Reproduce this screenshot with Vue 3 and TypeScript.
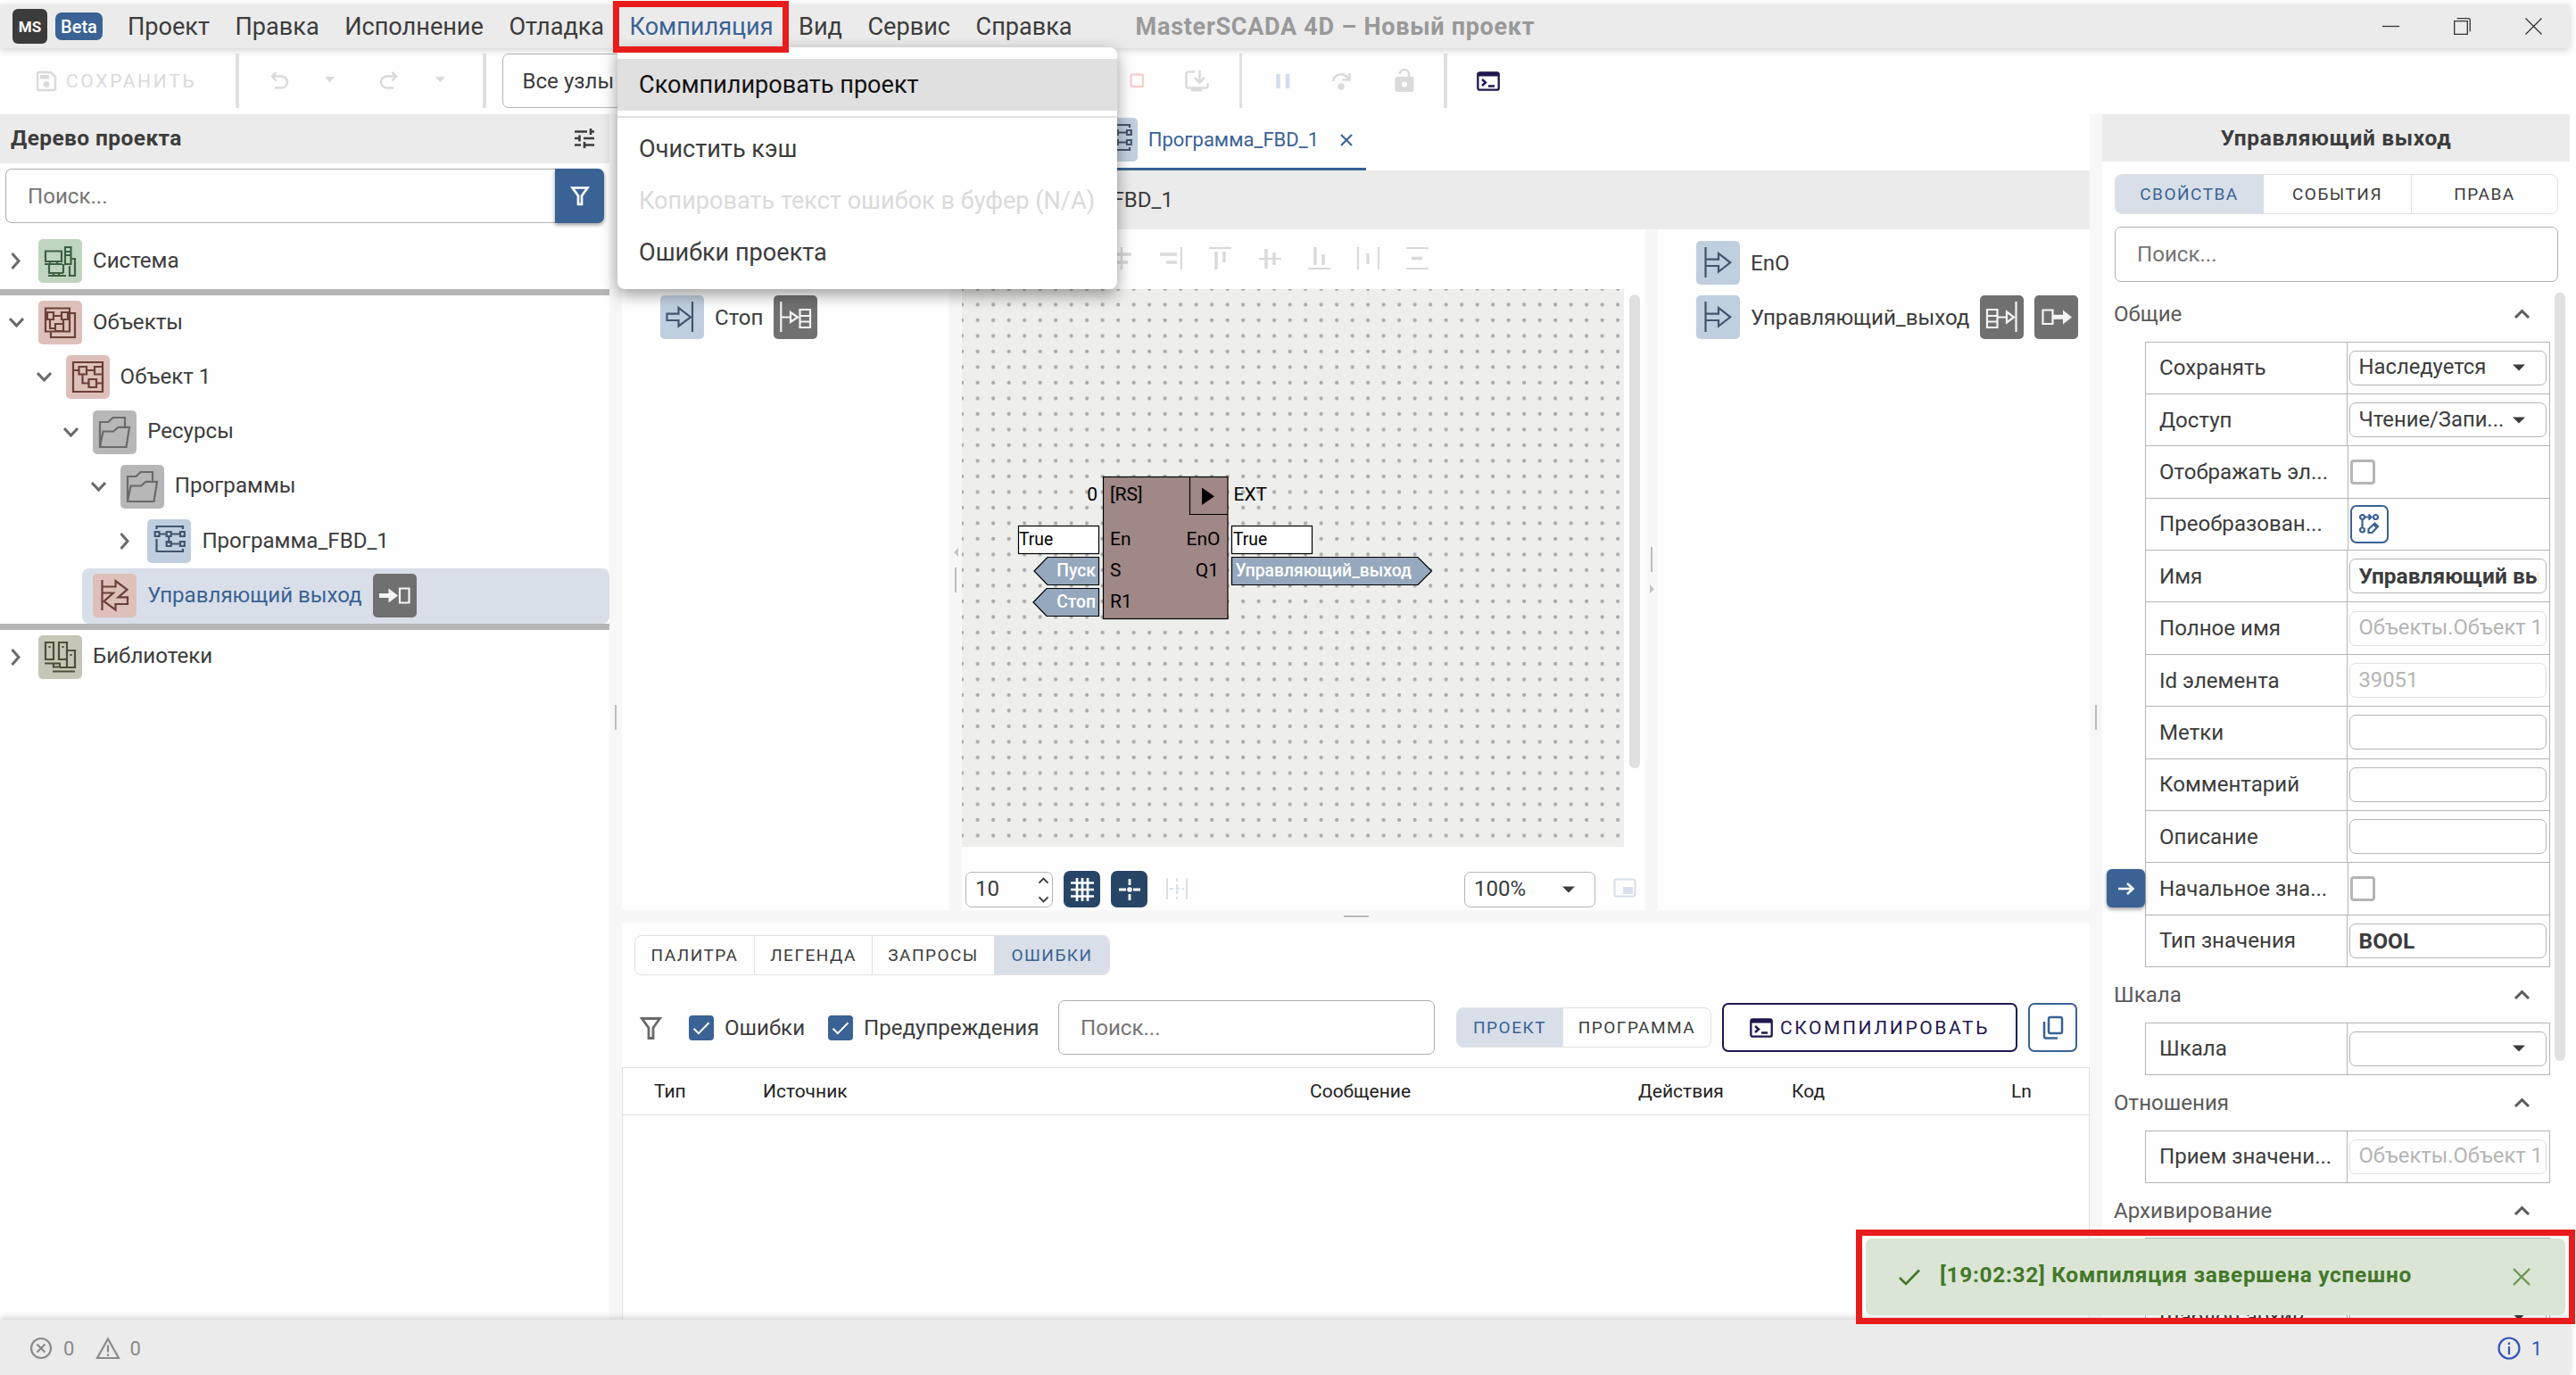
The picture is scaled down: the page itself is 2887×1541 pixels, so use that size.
<script setup lang="ts">
import { h } from 'vue'

interface IconDef { box: string; w: number; h: number; body: string }

const tile = (body: string): IconDef => ({ box: '0 0 49 49', w: 49, h: 49, body })
const glyph = (w: number, hh: number, body: string): IconDef => ({ box: `0 0 ${w} ${hh}`, w, h: hh, body })

const icons: Record<string, IconDef> = {
  system: tile('<path d="M8 13.500h18v11.500H8zM7 28h20M13 25v3M21 25v3M30 9h6.500v19H30zM30 14h6.500M30 18h6.500M12 28v10h16M28 28v10M11 41h20M17 38v3M23 38v3M36 22h5v19h-6V30"/>'),
  objects: tile('<path d="M8 8.500h27v26H8zM35 14h6v27H14v-6M10 13h7v8h-7zM26 13h7v8h-7zM17 17h9M13 21v10h6M19 26h9v8h-9zM28 21v5"/>'),
  object: tile('<path d="M8 8h33v33H8zM14.500 13h8.500v8.500h-8.500zM32 13h9v8.500h-9zM8 17h6M23 17h9M18.500 21.500v10H25M25.500 27h8.500v9h-8.500zM34 31.500h7"/>'),
  folder: tile('<path d="M8 41V13h9.500l5-5H36v11M8 41l3.500-17.500H23l5.500-4.700H41L37.500 41z"/>'),
  fbd: tile('<path d="M10.500 11V8H40v3M10.500 22v14H40v-3M13.500 16.500h8M27 16.500h10M24.300 19v8M27 27.500h10M8.700 14h4.800v5H8.700zM21.700 14h5v5h-5zM37 14h4.800v5H37zM21.700 25h5v5h-5zM37 25h4.800v5H37z"/>'),
  inout: tile('<path d="M10.500 7v34M10.500 14.500h15V8l13 9.800-10 8.500H39V34H25.500v6.500L12.500 31 23 21.500H10.500"/>'),
  libs: tile('<path d="M8 8h9v19H8zM23 8h9v19h-9zM32 17h9v19h-9zM7 31.500h18M17 31.500v4h7v-4M24 36h8v-9M16 40.500h25M12.500 12v2M27.500 12v2M36.500 21v2"/>'),
  arrowIn: tile('<path d="M7.500 20.700h13V14L34 24.500 20.500 34.500V28h-13zM36 7v34"/>'),
  arrowOut: tile('<path d="M10.500 7v34M10.500 20.700H25V14l13.200 10.300L25 34.500V28H10.500"/>'),
  linkIn: tile('<path d="M8.300 7v34M8.300 24.500H18M19 19l8 5.500-8 5.500zM29.500 16H41v20H29.500zM29.500 23H41M29.500 29.500H41"/>'),
  linkOut: tile('<path d="M8 16h11.500v20H8zM8 23h11.500M8 29.500h11.500M19.500 24.500h10M30 18.500l8 6-8 6zM40.500 7v34"/>'),
  toBox: tile('<path d="M7 24.500h12" stroke-width="5"/><path d="M17.500 16.500v16l10.500-8z" fill="currentColor" stroke="none"/><path d="M30 16.500h10.500v16H30z"/>'),
  fromBox: tile('<path d="M9.500 16.500h11v15.500h-11z"/><path d="M21 24.300h12" stroke-width="5"/><path d="M32 16.500v16l10-8z" fill="currentColor" stroke="none"/>'),
  right: glyph(17, 21, '<path d="M3.500 2l7.500 8.500L3.500 19" stroke-width="3"/>'),
  down: glyph(17, 21, '<path d="M1 6l7.500 8L16 6" stroke-width="3"/>'),
  up: glyph(19, 12, '<path d="M2 10l7.500-7.500L17 10" stroke-width="3"/>'),
  caret: glyph(14, 8, '<path d="M0 .5h14L7 7.500z" fill="currentColor" stroke="none"/>'),
  caretSmall: glyph(11, 7, '<path d="M0 0h11L5.500 6.500z" fill="currentColor" stroke="none"/>'),
  save: glyph(24, 24, '<path d="M2 3.500A1.500 1.500 0 0 1 3.500 2H17l5 5v13.500a1.500 1.500 0 0 1-1.500 1.500h-17A1.500 1.500 0 0 1 2 20.500z" stroke-width="2.500"/><path d="M5 5h10v4.500H5z" fill="currentColor" stroke="none"/><circle cx="12" cy="15.500" r="3.500" fill="currentColor" stroke="none"/>'),
  undo: glyph(22, 22, '<path d="M7.500 2L3 6.500l4.500 5M3 6.500h10.500a6 6 0 0 1 0 13H6" stroke-width="2.500"/>'),
  redo: glyph(22, 22, '<path d="M14.500 2L19 6.500l-4.500 5M19 6.500H8.500a6 6 0 0 0 0 13H16" stroke-width="2.500"/>'),
  stop: glyph(17, 17, '<rect x="1.500" y="1.500" width="13.500" height="13.500" rx="1.500" stroke-width="2.300"/>'),
  deploy: glyph(28, 26, '<path d="M12 2.500H4.500A2 2 0 0 0 2.500 4.500v14a2 2 0 0 0 2 2h20a2 2 0 0 0 2-2V15M17.500 1v13M12 9l5.500 5.500L23 9" stroke-width="2.500"/><path d="M8 20h12v4.500H8z" fill="currentColor" stroke="none"/>'),
  pause: glyph(18, 18, '<path d="M3.500 1v16M14 1v16" stroke-width="4.500"/>'),
  step: glyph(24, 22, '<path d="M2 11a9 9 0 0 1 17-2.500M20.500 2v7.500h-8" stroke-width="2.600"/><circle cx="11" cy="17" r="3.700" fill="currentColor" stroke="none"/>'),
  lock: glyph(24, 30, '<path d="M7 7a5 5 0 0 1 10 0v4" stroke-width="2.500"/><path d="M3.500 10h17a2 2 0 0 1 2 2v13a2 2 0 0 1-2 2h-17a2 2 0 0 1-2-2V12a2 2 0 0 1 2-2zM12 15.500a3 3 0 1 0 0 6 3 3 0 0 0 0-6z" fill="currentColor" fill-rule="evenodd" stroke="none"/>'),
  term: glyph(26, 22, '<rect x="1.300" y="1.300" width="23.400" height="19.400" rx="2" stroke-width="2.300"/><path d="M1 1h24v4.500H1z" fill="currentColor" stroke="none"/><path d="M6 9l4 3.500L6 16M13 16.500h7" stroke-width="2.400"/>'),
  tune: glyph(24, 24, '<path d="M1 4.500h14M19 1v7M19 4.500h4M1 12h5M6.500 8.500v7M11 12h12M1 19.500h7M12 16v7M12 19.500h11" stroke-width="2.600"/>'),
  funnel: glyph(26, 26, '<path d="M2.500 2.500h20L15 13v11.500h-5V13z" stroke-width="2.800"/>'),
  funnelSmall: glyph(22, 24, '<path d="M2.500 2.500h17L13 11.500V21H9v-9.500z" stroke-width="2.700"/>'),
  close: glyph(16, 16, '<path d="M2 2l12 12M14 2L2 14" stroke-width="2"/>'),
  closeBig: glyph(22, 22, '<path d="M2 2l18 18M20 2L2 20" stroke-width="2.300"/>'),
  check: glyph(26, 20, '<path d="M2 11l7 7L24 2.500" stroke-width="2.600"/>'),
  copy: glyph(26, 28, '<rect x="8" y="2" width="15" height="18" rx="2" stroke-width="2.500"/><path d="M3 7v16.500a2 2 0 0 0 2 2h13" stroke-width="2.500"/>'),
  grid: glyph(28, 28, '<path d="M8 1v26M14 1v26M20 1v26M1 6.500h26M1 14h26M1 21.500h26" stroke-width="2.700"/>'),
  snap: glyph(28, 28, '<path d="M14 2v7M14 19v7M2 14h8M18 14h8" stroke-width="2.800"/><circle cx="14" cy="14" r="2.800" fill="currentColor" stroke="none"/>'),
  guides: glyph(26, 26, '<path d="M2 1v24M24 1v24" stroke-width="2"/><path d="M13 1v24M5 13h16" stroke-width="2" stroke-dasharray="4 3"/>'),
  minimap: glyph(26, 22, '<rect x="1.500" y="1.500" width="23" height="19" rx="2"/><path d="M11 10h11v8H11z" fill="currentColor" stroke="none"/>'),
  arrow: glyph(20, 16, '<path d="M1 8h16M11 2l6.500 6L11 14" stroke-width="2.500"/>'),
  convert: glyph(24, 24, '<circle cx="4.500" cy="4.500" r="2.500"/><circle cx="19.500" cy="4.500" r="2.500"/><circle cx="4.500" cy="19" r="2.500"/><path d="M4.500 7v9.500M8 4.500h6M11.500 1.500l3 3-3 3"/><path d="M11.500 22v-4l7-6.500 3.500 3.500-6.500 7z" stroke-width="2.200"/><path d="M17 12l3.500 3.500" stroke-width="3"/>'),
  alignHCenter: glyph(26, 26, '<path d="M13 1v25"/><path d="M2 9h22M6 18h14" stroke-width="3.500"/>'),
  alignRight: glyph(26, 26, '<path d="M25 1v25"/><path d="M1 9h19M8 18h12" stroke-width="3.500"/>'),
  alignTop: glyph(26, 26, '<path d="M1 2h25"/><path d="M9 6v20M18 6v12" stroke-width="3.500"/>'),
  alignMiddle: glyph(26, 26, '<path d="M1 14h25"/><path d="M9 3v22M18 7v14" stroke-width="3.500"/>'),
  alignBottom: glyph(26, 26, '<path d="M1 25h25"/><path d="M9 1v20M18 9v12" stroke-width="3.500"/>'),
  distH: glyph(26, 26, '<path d="M2 1v25M25 1v25"/><path d="M13 8v12" stroke-width="3.500"/>'),
  distV: glyph(26, 26, '<path d="M1 2h25M1 25h25"/><path d="M7 13.500h12" stroke-width="3.500"/>'),
  errors: glyph(26, 26, '<circle cx="13" cy="13" r="11"/><path d="M8.500 8.500l9 9M17.500 8.500l-9 9"/>'),
  warn: glyph(28, 26, '<path d="M14 2.500L26 24H2zM14 9.500v8M14 19.500v2.500"/>'),
  info: glyph(26, 26, '<circle cx="13" cy="13" r="11.500"/><path d="M13 11v9M13 6.500v2.500"/>'),
  minimize: glyph(19, 19, '<path d="M0 9.500h19" stroke-width="1.300"/>'),
  restore: glyph(19, 19, '<path d="M.7 3.700h14.600v14.600H.7zM3.700 .7h12.600a2 2 0 0 1 2 2v12.600" stroke-width="1.300"/>'),
  winClose: glyph(19, 19, '<path d="M.5 .5l18 18M18.500 .5l-18 18" stroke-width="1.300"/>'),
}

const Icon = (props: { name: string }) => {
  const d = icons[props.name]
  return h('svg', {
    viewBox: d.box, width: d.w, height: d.h, fill: 'none', stroke: 'currentColor',
    'stroke-width': 2.2, style: 'display:block;flex:none', innerHTML: d.body,
  })
}
Icon.props = ['name']

const menuLeft = ['Проект', 'Правка', 'Исполнение', 'Отладка', 'Компиляция', 'Вид', 'Сервис', 'Справка']

interface TreeRow { label: string; icon: string; tone: string; level: number; chevron: string; line?: boolean; selected?: boolean }
const tree: TreeRow[] = [
  { label: 'Система', icon: 'system', tone: 'green', level: 0, chevron: 'right', line: true },
  { label: 'Объекты', icon: 'objects', tone: 'red', level: 0, chevron: 'down' },
  { label: 'Объект 1', icon: 'object', tone: 'red', level: 1, chevron: 'down' },
  { label: 'Ресурсы', icon: 'folder', tone: 'gray', level: 2, chevron: 'down' },
  { label: 'Программы', icon: 'folder', tone: 'gray', level: 3, chevron: 'down' },
  { label: 'Программа_FBD_1', icon: 'fbd', tone: 'blue', level: 4, chevron: 'right' },
  { label: 'Управляющий выход', icon: 'inout', tone: 'red', level: 2, chevron: '', line: true, selected: true },
  { label: 'Библиотеки', icon: 'libs', tone: 'olive', level: 0, chevron: 'right' },
]

interface Prop { label: string; kind: 'select' | 'check' | 'button' | 'text'; value?: string; bold?: boolean; off?: boolean; reset?: boolean }
const groups: { title: string; rows: Prop[] }[] = [
  {
    title: 'Общие',
    rows: [
      { label: 'Сохранять', kind: 'select', value: 'Наследуется' },
      { label: 'Доступ', kind: 'select', value: 'Чтение/Запи...' },
      { label: 'Отображать эл...', kind: 'check' },
      { label: 'Преобразован...', kind: 'button' },
      { label: 'Имя', kind: 'text', value: 'Управляющий выход', bold: true },
      { label: 'Полное имя', kind: 'text', value: 'Объекты.Объект 1', off: true },
      { label: 'Id элемента', kind: 'text', value: '39051', off: true },
      { label: 'Метки', kind: 'text' },
      { label: 'Комментарий', kind: 'text' },
      { label: 'Описание', kind: 'text' },
      { label: 'Начальное зна...', kind: 'check', reset: true },
      { label: 'Тип значения', kind: 'text', value: 'BOOL', bold: true },
    ],
  },
  { title: 'Шкала', rows: [{ label: 'Шкала', kind: 'select', value: '' }] },
  { title: 'Отношения', rows: [{ label: 'Прием значени...', kind: 'text', value: 'Объекты.Объект 1', off: true }] },
  { title: 'Архивирование', rows: [{ label: '', kind: 'check' }, { label: 'Шаблон архив...', kind: 'select', value: '' }] },
]

const alignTools = ['alignHCenter', 'alignRight', 'alignTop', 'alignMiddle', 'alignBottom', 'distH', 'distV']
</script>

<template>
  <div class="app">
    <header class="titlebar">
      <span class="logo">MS</span>
      <span class="beta">Beta</span>
      <nav class="menu">
        <span v-for="m in menuLeft" :key="m" :class="{ on: m === 'Компиляция' }">{{ m }}</span>
      </nav>
      <span class="caption">MasterSCADA 4D – Новый проект</span>
      <div class="win"><Icon name="minimize" /><Icon name="restore" /><Icon name="winClose" /></div>
    </header>

    <div class="toolbar">
      <div class="save"><Icon name="save" /><span>СОХРАНИТЬ</span></div>
      <i class="sep"></i>
      <div class="history">
        <Icon name="undo" /><Icon name="caretSmall" /><Icon name="redo" /><Icon name="caretSmall" />
      </div>
      <i class="sep"></i>
      <div class="nodes">Все узлы</div>
      <div class="run"><Icon class="pink" name="stop" /><Icon name="deploy" /></div>
      <i class="sep"></i>
      <div class="debug"><Icon class="bluish" name="pause" /><Icon name="step" /><Icon name="lock" /></div>
      <i class="sep"></i>
      <div class="term"><Icon name="term" /></div>
    </div>

    <main class="main">
      <aside class="left">
        <div class="left-head"><b>Дерево проекта</b><Icon name="tune" /></div>
        <div class="find">
          <div class="find-input">Поиск...</div>
          <div class="find-btn"><Icon name="funnelSmall" /></div>
        </div>
        <div class="tree">
          <template v-for="r in tree" :key="r.label">
            <div class="row" :style="{ paddingLeft: r.level * 30.600 + 'px' }">
              <span class="chev"><Icon v-if="r.chevron" :name="r.chevron" /></span>
              <div class="row-body" :class="{ sel: r.selected }">
                <span class="tile" :class="r.tone"><Icon :name="r.icon" /></span>
                <span class="name">{{ r.label }}</span>
                <span v-if="r.selected" class="tile dark"><Icon name="toBox" /></span>
              </div>
            </div>
            <div v-if="r.line" class="line"></div>
          </template>
        </div>
      </aside>

      <div class="split-v"><i></i></div>

      <section class="center">
        <div class="tabs">
          <div class="tab">
            <span class="tile blue"><Icon name="fbd" /></span>
            <span>Программа_FBD_1</span>
            <Icon name="close" />
          </div>
        </div>
        <div class="crumb"><span>FBD_1</span></div>
        <div class="editor">
          <div class="inputs">
            <div class="pin"><span class="tile blue"><Icon name="arrowIn" /></span></div>
            <div class="pin"><span class="tile blue"><Icon name="arrowIn" /></span><span>Стоп</span><span class="tile dark"><Icon name="linkIn" /></span></div>
          </div>
          <div class="split-v up"><b class="tri-l"></b><i></i></div>
          <div class="board">
            <div class="aligns"><Icon v-for="a in alignTools" :key="a" :name="a" /></div>
            <div class="canvas-row">
              <svg class="canvas" viewBox="1078 324 742 625" width="742" height="625">
                <defs>
                  <pattern id="dots" x="1069.4" y="315.2" width="17.5" height="17.5" patternUnits="userSpaceOnUse">
                    <circle cx="8.75" cy="8.75" r="2.1" fill="#a9a9a7" />
                  </pattern>
                </defs>
                <rect x="1078" y="324" width="742" height="625" fill="#eeeeec" />
                <rect x="1078" y="324" width="742" height="625" fill="url(#dots)" />
                <g stroke="#000" stroke-width="1.2">
                  <rect x="1236.500" y="534.500" width="139.500" height="159" fill="#a08887" />
                  <path d="M1333.500 534.500v42H1376" fill="none" />
                  <rect x="1141.500" y="589.500" width="90" height="31" fill="#fff" />
                  <rect x="1380.500" y="589.500" width="90" height="31" fill="#fff" />
                  <path d="M1159 640l15-15.500h57.500v31H1174z" fill="#96a8bd" />
                  <path d="M1158 675l15-15.500h58.500v31H1173z" fill="#96a8bd" />
                  <path d="M1380.500 624.500h208.500l15.500 15.500-15.500 15.500h-208.500z" fill="#96a8bd" />
                </g>
                <path d="M1347 546.500v19.500l14-9.700z" />
                <g font-size="21">
                  <text x="1230" y="561" text-anchor="end">0</text>
                  <text x="1244" y="561">[RS]</text>
                  <text x="1382.500" y="561">EXT</text>
                  <text x="1244" y="611">En</text>
                  <text x="1244" y="646">S</text>
                  <text x="1244" y="681">R1</text>
                  <text x="1367.500" y="611" text-anchor="end">EnO</text>
                  <text x="1366" y="646" text-anchor="end">Q1</text>
                </g>
                <g font-size="19.3">
                  <text x="1142" y="611">True</text>
                  <text x="1382" y="611">True</text>
                </g>
                <g font-size="19.3" font-weight="500" fill="#fff">
                  <text x="1228" y="646" text-anchor="end">Пуск</text>
                  <text x="1228" y="681" text-anchor="end">Стоп</text>
                  <text x="1384.500" y="646">Управляющий_выход</text>
                </g>
              </svg>
              <div class="scroll"></div>
            </div>
            <div class="board-foot">
              <div class="spin"><span>10</span><div><Icon name="up" /><Icon class="flip" name="up" /></div></div>
              <span class="sq"><Icon name="grid" /></span>
              <span class="sq"><Icon name="snap" /></span>
              <span class="faint"><Icon name="guides" /></span>
              <div class="zoom"><span>100%</span><Icon name="caret" /></div>
              <span class="faint mm"><Icon name="minimap" /></span>
            </div>
          </div>
          <div class="split-v low"><i></i><b class="tri-r"></b></div>
          <div class="outputs">
            <div class="pin"><span class="tile blue"><Icon name="arrowOut" /></span><span>EnO</span></div>
            <div class="pin"><span class="tile blue"><Icon name="arrowOut" /></span><span>Управляющий_выход</span><span class="tile dark"><Icon name="linkOut" /></span><span class="tile dark"><Icon name="fromBox" /></span></div>
          </div>
        </div>
        <div class="split-h"><i></i></div>
        <div class="bottom">
          <div class="seg t4">
            <span>ПАЛИТРА</span><span>ЛЕГЕНДА</span><span>ЗАПРОСЫ</span><span class="act">ОШИБКИ</span>
          </div>
          <div class="filters">
            <Icon class="gray" name="funnel" />
            <span class="cb c1"><Icon name="check" /></span><span class="cbl l1">Ошибки</span>
            <span class="cb"><Icon name="check" /></span><span class="cbl l2">Предупреждения</span>
            <div class="box">Поиск...</div>
            <div class="seg t2"><span class="act">ПРОЕКТ</span><span>ПРОГРАММА</span></div>
            <div class="compile"><Icon name="term" /><span>СКОМПИЛИРОВАТЬ</span></div>
            <div class="copy"><Icon name="copy" /></div>
          </div>
          <div class="table">
            <div class="thead">
              <span>Тип</span><span>Источник</span><span>Сообщение</span><span>Действия</span><span>Код</span><span>Ln</span>
            </div>
          </div>
        </div>
      </section>

      <div class="split-v"><i></i></div>

      <aside class="right">
        <div class="right-head">Управляющий выход</div>
        <div class="seg t3"><span class="act">СВОЙСТВА</span><span>СОБЫТИЯ</span><span>ПРАВА</span></div>
        <div class="rfind">Поиск...</div>
        <div class="props-wrap">
          <div class="props">
            <section v-for="g in groups" :key="g.title">
              <div class="group"><span>{{ g.title }}</span><Icon name="up" /></div>
              <div class="ptable">
                <div v-for="p in g.rows" :key="p.label" class="prow">
                  <div v-if="p.reset" class="reset"><Icon name="arrow" /></div>
                  <div class="plabel">{{ p.label }}</div>
                  <div class="pval">
                    <div v-if="p.kind === 'select'" class="field"><span>{{ p.value }}</span><Icon name="caret" /></div>
                    <div v-else-if="p.kind === 'text'" class="field" :class="{ off: p.off, bold: p.bold }"><span>{{ p.value }}</span></div>
                    <div v-else-if="p.kind === 'check'" class="cbox"></div>
                    <div v-else class="conv"><Icon name="convert" /></div>
                  </div>
                </div>
              </div>
            </section>
          </div>
          <div class="pscroll"></div>
        </div>
      </aside>
    </main>

    <footer class="status">
      <Icon name="errors" /><span class="n1">0</span><Icon name="warn" /><span class="n2">0</span>
      <span class="info"><Icon name="info" /><span>1</span></span>
    </footer>

    <div class="popup">
      <div class="item hover">Скомпилировать проект</div>
      <hr />
      <div class="item">Очистить кэш</div>
      <div class="item off">Копировать текст ошибок в буфер (N/A)</div>
      <div class="item">Ошибки проекта</div>
    </div>

    <div class="toast"><Icon name="check" /><span>[19:02:32] Компиляция завершена успешно</span><Icon class="tx" name="closeBig" /></div>
    <div class="mark m1"></div>
    <div class="mark m2"></div>
  </div>
</template>

<style>
body { background: #fff; }
</style>

<style scoped>
* { box-sizing: border-box; }
.app {
  position: relative; width: 2887px; height: 1541px; overflow: hidden; padding-top: 5px;
  display: flex; flex-direction: column; background: #fefefe;
  font-family: Roboto, "Noto Sans", sans-serif; font-size: 24.100px; color: #3c3c3c; white-space: nowrap;
}
.titlebar {
  position: relative; z-index: 2; flex: none; width: 2880px; height: 49px; background: #ebebeb;
  display: flex; align-items: center; padding-left: 14px; box-shadow: 0 2px 8px rgba(0, 0, 0, .18);
}
.logo {
  width: 39px; height: 39px; border-radius: 6px; background: #3c3c3c; color: #fff; font-weight: 700;
  font-size: 17px; display: flex; align-items: center; justify-content: center; margin-right: 9px;
}
.beta {
  width: 53px; height: 31px; border-radius: 7px; background: #3a6294; color: #fff; font-weight: 500;
  font-size: 20px; display: flex; align-items: center; justify-content: center;
}
.menu { display: flex; gap: 28.500px; margin-left: 28px; font-size: 27.100px; }
.menu .on { color: #3a6294; }
.caption { margin-left: 71px; font-size: 27px; font-weight: 700; letter-spacing: .720px; color: #999; }
.win { margin-left: auto; display: flex; gap: 61px; padding-right: 31px; color: #333; }

.toolbar { flex: none; height: 74px; display: flex; align-items: center; padding-bottom: 1px; color: #dadada; }
.toolbar .sep { width: 3.500px; height: 61px; background: #e0e0e0; flex: none; }
.save { width: 264px; padding-left: 40px; display: flex; align-items: center; gap: 10px; font-size: 21px; letter-spacing: 2.700px; }
.history { width: 273.500px; display: flex; align-items: center; padding-left: 34px; padding-bottom: 2px; }
.history svg:nth-child(2) { margin-left: 40px; }
.history svg:nth-child(3) { margin-left: 50px; }
.history svg:nth-child(4) { margin-left: 41px; }
.nodes {
  margin-left: 18px; width: 320px; height: 61px; border: 1.500px solid #b5b5b5; border-radius: 7px;
  color: #3c3c3c; padding-left: 22px; display: flex; align-items: center;
}
.run { width: 506px; display: flex; justify-content: flex-end; align-items: center; gap: 44px; padding-right: 34px; }
.pink { color: #f4d0cb; }
.bluish { color: #d5dbf0; }
.debug { width: 226px; display: flex; align-items: center; padding-left: 36.500px; gap: 45.500px; }
.term { padding-left: 33px; color: #1f174f; }

.main { flex: none; height: 1351px; display: flex; }
.left { width: 683px; }
.left-head { height: 55px; background: #ebebeb; display: flex; align-items: center; justify-content: space-between; padding: 0 16px 1px 12px; }
.left-head b, .right-head { font-weight: 700; font-size: 24.500px; letter-spacing: .400px; }
.left-head b { padding-bottom: 1px; }
.find { margin: 6px 6px 0; height: 61px; display: flex; }
.find-input { flex: 1; border: 1.500px solid #b0b0b0; border-right: 0; border-radius: 7px 0 0 7px; display: flex; align-items: center; padding-left: 24px; color: #757575; }
.find-btn { width: 55px; background: #3a6294; color: #fff; border-radius: 0 7px 7px 0; display: flex; align-items: center; justify-content: center; box-shadow: 0 2px 4px rgba(0, 0, 0, .4); }
.tree { margin-top: 12px; }
.row { height: 61.250px; display: flex; align-items: stretch; }
.row:first-child { height: 62px; padding-bottom: 1px; }
.chev { width: 31px; display: flex; align-items: center; padding-left: 10px; color: #6a6a6a; flex: none; }
.row-body { flex: 1; display: flex; align-items: center; padding-left: 12px; border-radius: 8px; }
.row-body.sel { background: #d8dfe8; color: #3a6294; }
.name { margin: 0 12px; padding-bottom: 2px; }
.line { height: 7px; background: #b5b5b5; }
.tile { width: 49px; height: 49px; border-radius: 5px; flex: none; display: block; }
.green { background: #c0d5be; color: #3d5f41; }
.red { background: #dec0ba; color: #6b4037; }
.gray { color: #6a6a6a; }
.tile.gray { background: #b7b7b7; }
.blue { background: #c0cfdf; color: #42556d; }
.olive { background: #c6c6b8; color: #4c4f38; }
.dark { background: #707070; color: #f4f4f4; }

.split-v { width: 14px; background: #f7f7f7; flex: none; display: flex; flex-direction: column; align-items: center; justify-content: center; }
.split-v i { width: 2px; height: 28px; background: #bbb; }
.tri-l, .tri-r { border: 5px solid transparent; width: 0; height: 0; }
.tri-l { border-right-color: #c4c4c4; border-left: 0; margin-bottom: 12px; }
.tri-r { border-left-color: #c4c4c4; border-right: 0; margin-top: 14px; }

.center { width: 1645px; flex: none; display: flex; flex-direction: column; }
.tabs { height: 63px; display: flex; }
.tab { width: 834px; border-bottom: 3px solid #3a6294; display: flex; align-items: center; justify-content: flex-end; padding-right: 14px; font-size: 22px; color: #3a6294; padding-bottom: 3px; }
.tab .tile { margin-right: 12px; }
.tab > svg { margin-left: 23px; }
.crumb { height: 66px; background: #ebebeb; display: flex; align-items: center; }
.crumb span { width: 618px; text-align: right; }
.editor { height: 763px; display: flex; }
.inputs { width: 367px; padding: 7px 0 0 43px; }
.outputs { width: 484px; padding: 7px 0 0 43px; }
.pin { height: 61.250px; display: flex; align-items: center; gap: 12px; }
.board { width: 766px; }
.aligns { height: 67px; display: flex; align-items: center; gap: 29.200px; padding: 0 0 3px 166px; color: #dadada; }
.canvas-row { display: flex; height: 625px; }
.canvas { display: block; font-family: Roboto, sans-serif; }
.scroll { width: 12px; height: 531px; margin: 6px 0 0 6px; border-radius: 6px; background: #e0e0e0; }
.board-foot { height: 71px; display: flex; align-items: flex-start; padding: 27px 10px 0 4px; }
.spin, .zoom { height: 40px; margin-top: 1px; border: 1.500px solid #b5b5b5; border-radius: 7px; display: flex; align-items: center; }
.spin { width: 98px; padding: 0 3px 0 10px; justify-content: space-between; margin-right: 12px; }
.spin > span, .zoom > span { padding-bottom: 1.500px; }
.spin div { display: flex; flex-direction: column; gap: 13px; }
.spin svg { width: 13px; height: 8px; }
.flip { transform: rotate(180deg); }
.sq { width: 41px; height: 41px; background: #274667; border-radius: 7px; color: #fff; display: flex; align-items: center; justify-content: center; margin-right: 12px; }
.faint { color: #d8dfe8; margin: 7px 0 0 8px; }
.zoom { margin-left: auto; width: 147px; padding: 0 22px 0 10px; justify-content: space-between; }
.mm { margin: 8px 0 0 20px; }

.split-h { height: 14px; background: #f7f7f7; display: flex; align-items: center; justify-content: center; }
.split-h i { width: 28px; height: 2px; background: #bbb; }
.bottom { flex: 1; display: flex; flex-direction: column; }
.seg { display: grid; height: 45px; border: 1.500px solid #e0e0e0; border-radius: 8px; overflow: hidden; font-size: 19px; letter-spacing: 1.500px; flex: none; }
.seg span { display: flex; align-items: center; justify-content: center; border-left: 1.500px solid #e0e0e0; padding-bottom: 1px; }
.seg span:first-child { border-left: 0; }
.seg .act { background: #d8dfe8; color: #3a6294; }
.t4 { margin: 14px 0 0 14px; width: 533px; grid-template-columns: 133px 132px 137px 1fr; }
.t2 { margin-left: 24px; width: 286px; grid-template-columns: 118px 1fr; }
.t3 { margin: 14px 13px 0 14px; grid-template-columns: 165px 166px 1fr; }
.filters { height: 61px; margin-top: 28px; display: flex; align-items: center; padding-left: 20px; }
.filters > * { flex: none; }
.cb { width: 28px; height: 28px; background: #3a6294; border-radius: 4px; color: #fff; display: flex; align-items: center; justify-content: center; }
.cb svg { width: 20px; }
.c1 { margin-left: 29px; }
.cbl { margin-left: 12px; }
.l1 { width: 116px; }
.l2 { width: 218px; }
.box { width: 422px; height: 61px; border: 1.500px solid #b0b0b0; border-radius: 7px; padding-left: 24px; display: flex; align-items: center; color: #757575; }
.compile { margin-left: 12px; width: 331px; height: 55px; border: 2px solid #1f174f; border-radius: 7px; color: #1f174f; display: flex; align-items: center; justify-content: center; gap: 8px; font-size: 21px; letter-spacing: 2.600px; }
.copy { margin-left: 12px; width: 55px; height: 55px; border: 2px solid #3a6294; border-radius: 7px; color: #3a6294; display: flex; align-items: center; justify-content: center; }
.table { margin-top: 14px; flex: 1; border: 1px solid #e0e0e0; border-bottom: 0; }
.thead { height: 53px; border-bottom: 1.500px solid #e0e0e0; display: grid; grid-template-columns: 122px 613px 368px 172px 246px 1fr; align-items: center; padding-left: 35px; font-size: 21px; color: #222; }

.right { width: 524px; height: 1350px; overflow: hidden; flex: none; }
.right-head { height: 53px; background: #ebebeb; display: flex; align-items: center; justify-content: center; letter-spacing: .680px; }
.rfind { margin: 14px 13px 0 14px; height: 62px; border: 1.500px solid #b0b0b0; border-radius: 7px; padding: 0 0 1px 24px; display: flex; align-items: center; color: #757575; }
.props-wrap { display: flex; padding-top: 5px; }
.props { width: 507px; }
.pscroll { width: 12px; height: 861px; margin-top: 7px; border-radius: 6px; background: #e0e0e0; }
.group { height: 61.500px; display: flex; align-items: center; justify-content: space-between; padding: 0 27px 0 13px; color: #5a5a5a; }
.ptable { margin-left: 48px; width: 453.500px; border: 1.300px solid #b5b5b5; border-top: 0; }
.prow { position: relative; height: 58.400px; border-top: 1.300px solid #b5b5b5; display: flex; }
.plabel { width: 225.500px; padding-left: 15px; display: flex; align-items: center; }
.pval { flex: 1; border-left: 1.300px solid #b5b5b5; padding: 0 3px 0 2px; display: flex; align-items: center; }
.field { width: 221px; height: 39px; border: 1.300px solid #b5b5b5; border-radius: 7px; padding: 0 8px 2px 10px; display: flex; align-items: center; justify-content: space-between; font-size: 23.800px; }
.field span { overflow: hidden; }
.field svg { margin-right: 15px; position: relative; top: 1px; }
.field.bold { font-weight: 700; font-size: 24.500px; padding-bottom: 0; }
.field.off { border-color: #e0e0e0; color: #b5b5b5; }
.cbox { width: 28px; height: 28px; border: 3px solid #b5b5b5; border-radius: 4px; }
.conv { width: 43px; height: 43px; border: 2px solid #3a6294; border-radius: 7px; color: #3a6294; display: flex; align-items: center; justify-content: center; }
.reset { position: absolute; left: -44px; top: 7px; width: 43px; height: 43px; border-radius: 6px; background: #3a6294; color: #fff; display: flex; align-items: center; justify-content: center; box-shadow: 0 2px 4px rgba(0, 0, 0, .4); }

.status { position: relative; flex: none; width: 2880px; height: 62px; background: #ebebeb; display: flex; align-items: center; padding: 2px 31px 0 33px; color: #8a8a8a; font-size: 22px; box-shadow: 0 -2px 7px rgba(0, 0, 0, .18); }
.n1 { margin: 0 24px 0 12px; }
.n2 { margin-left: 10px; }
.info { margin-left: auto; display: flex; gap: 12px; align-items: center; color: #3355b5; }

.popup { position: absolute; z-index: 3; left: 692px; top: 53px; width: 560px; height: 271px; background: #fff; border-radius: 0 8px 8px 8px; padding-top: 13px; box-shadow: 0 6px 18px rgba(0, 0, 0, .4); font-size: 27.100px; }
.item { height: 58px; padding-left: 24px; display: flex; align-items: center; }
.hover { background: #e0e0e0; color: #111; }
.off { color: #dadada; }
.popup hr { margin: 6px 0; border: 0; height: 2px; background: #e0e0e0; }
.toast { position: absolute; z-index: 3; left: 2091px; top: 1388px; width: 784px; height: 86px; background: #dae5d5; border-radius: 7px; display: flex; align-items: center; padding: 0 38px 0 36px; color: #43782a; font-weight: 700; }
.toast span { margin: 0 auto 6px 21px; font-size: 24.500px; letter-spacing: .670px; }
.tx { color: #6a9650; }
.mark { position: absolute; z-index: 4; border: 7px solid #e81c1c; }
.m1 { left: 687px; top: 1px; width: 197px; height: 58px; }
.m2 { left: 2080px; top: 1378px; width: 806px; height: 106px; }
</style>
